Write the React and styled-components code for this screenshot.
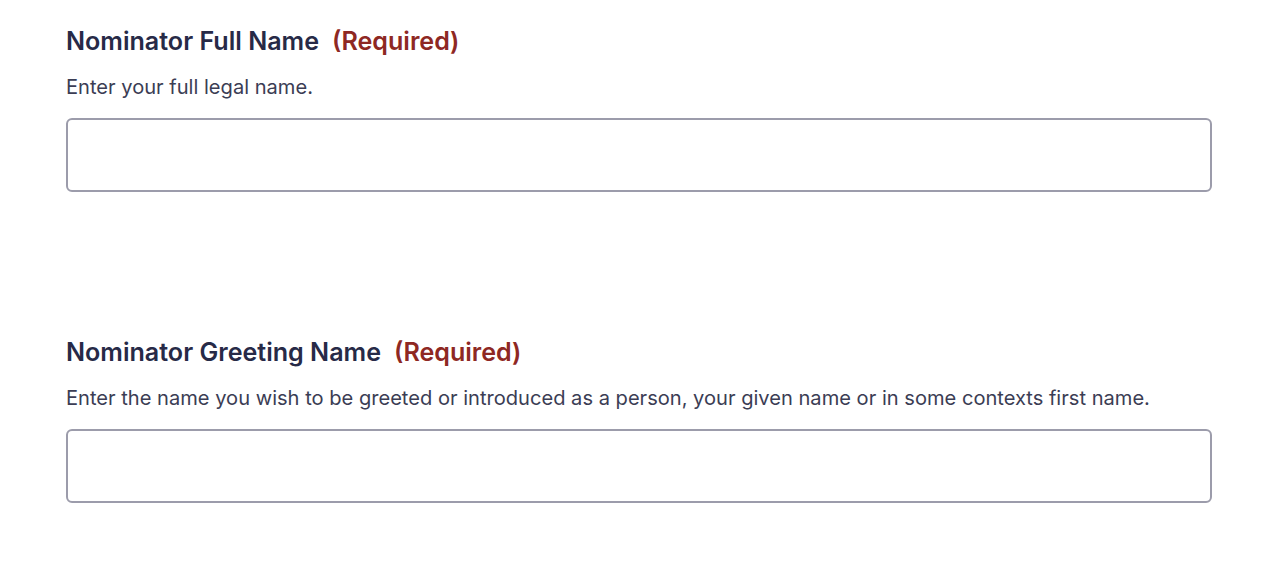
import React from 'react';
import styled, { createGlobalStyle } from 'styled-components';

const GlobalStyle = createGlobalStyle`
  body {
    margin: 0;
    background: #ffffff;
    font-family: Inter, "Noto Sans", sans-serif;
  }
`;

const Form = styled.form`
  display: flex;
  flex-direction: column;
  gap: 145px;
  padding: 26px 68px 0 66px;
`;

const Field = styled.div`
  display: flex;
  flex-direction: column;
`;

const Label = styled.label`
  font-size: 25.1px;
  font-weight: 600;
  line-height: 30px;
  color: #272a47;
`;

const Required = styled.span`
  color: #8e2823;
  margin-left: 13px;
`;

const Hint = styled.p`
  margin: 19px 0 19px;
  font-size: 20.1px;
  line-height: 24px;
  color: #3b3d54;
`;

const Input = styled.input`
  box-sizing: border-box;
  width: 100%;
  height: 74px;
  border: 2px solid #9c9cab;
  border-radius: 6px;
  padding: 0 16px;
  font: inherit;
  font-size: 20px;
  background: #fff;
  outline: none;
`;

const fields = [
  {
    id: 'full-name',
    label: 'Nominator Full Name',
    hint: 'Enter your full legal name.',
  },
  {
    id: 'greeting-name',
    label: 'Nominator Greeting Name',
    hint: 'Enter the name you wish to be greeted or introduced as a person, your given name or in some contexts first name.',
  },
];

const App = () => (
  <>
    <GlobalStyle />
    <Form>
      {fields.map((f) => (
        <Field key={f.id}>
          <Label htmlFor={f.id}>
            {f.label}
            <Required>(Required)</Required>
          </Label>
          <Hint>{f.hint}</Hint>
          <Input id={f.id} type="text" />
        </Field>
      ))}
    </Form>
  </>
);

export default App;
